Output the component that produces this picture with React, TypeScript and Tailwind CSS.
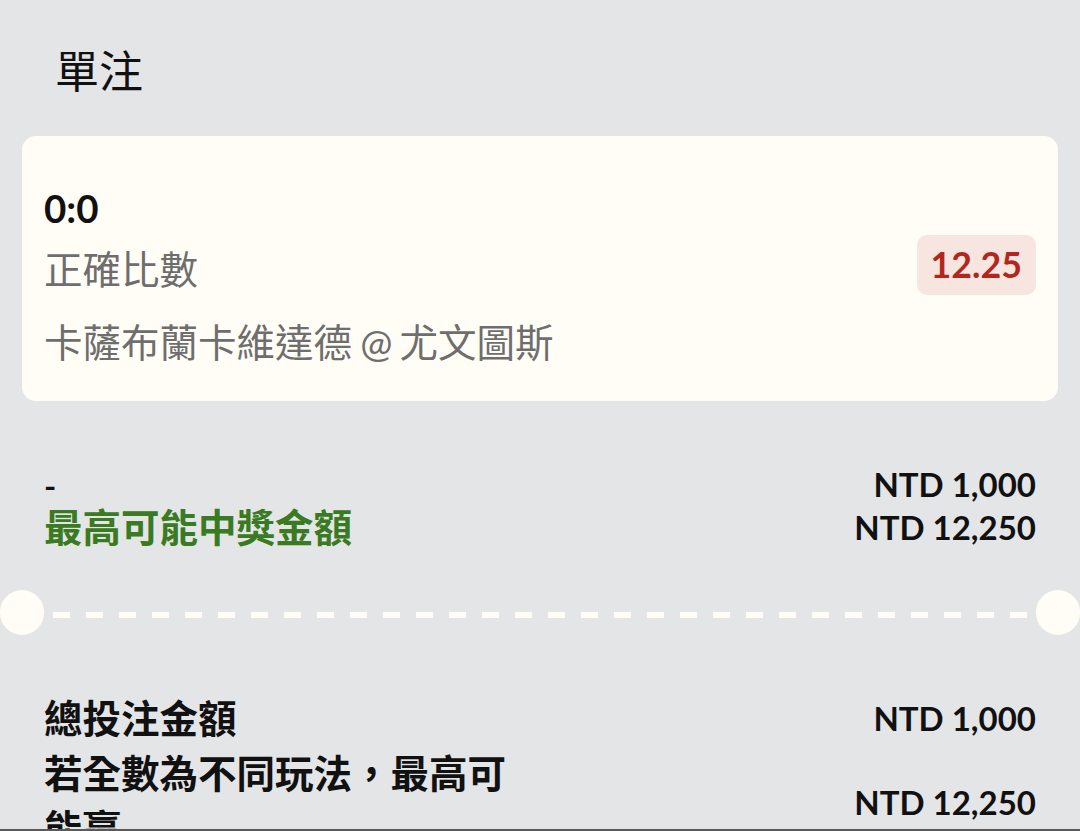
import React from "react";

const font = { fontFamily: "Lato, 'Noto Sans CJK TC', sans-serif" };

export default function App() {
  return (
    <div
      className="w-[1080px] h-[831px] bg-[#e4e5e7] flex flex-col overflow-hidden font-['Lato','Noto_Sans_CJK_TC',sans-serif]"
      style={font}
    >
      <div className="h-[829px] overflow-hidden flex flex-col">
        {/* Title */}
        <div className="pt-[41px] pl-[55px] text-[44px] leading-[60px] text-[#111111]">單注</div>

        {/* Selection card */}
        <div className="mt-[35px] mx-[22px] h-[265px] rounded-[14px] bg-[#fffdf5] px-[22px] flex items-center justify-between">
          <div className="flex flex-col pt-[47px] pb-[23px]">
            <div className="text-[38.5px] leading-[50px] font-bold text-[#111111]">0:0</div>
            <div className="text-[38.5px] leading-[73px] text-[#6e6e6e]">正確比數</div>
            <div className="text-[38.5px] leading-[72px] text-[#6e6e6e]">
              卡薩布蘭卡維達德<span className="tracking-[-1.5px]"> @ </span>尤文圖斯
            </div>
          </div>
          <div className="mb-[7px] h-[60px] px-[14px] rounded-[10px] bg-[#f6e6df] flex items-center text-[35.75px] font-bold text-[#b3261e]">
            12.25
          </div>
        </div>

        {/* Stake summary */}
        <div className="mt-[62px] px-[44px] flex flex-col">
          <div className="h-[43px] flex items-center justify-between">
            <span className="text-[33px] font-bold text-[#111111] translate-y-[1px]">-</span>
            <span className="text-[33px] font-bold text-[#111111]">NTD 1,000</span>
          </div>
          <div className="h-[43px] flex items-center justify-between">
            <span className="text-[38.5px] font-bold text-[#3a7a22] leading-[43px]">最高可能中獎金額</span>
            <span className="text-[33px] font-bold text-[#111111]">NTD 12,250</span>
          </div>
        </div>

        {/* Ticket divider */}
        <div className="mt-[41px] flex items-center">
          <div className="w-[44px] h-[45px] rounded-full bg-[#fffdf5] shrink-0" />
          <div className="flex-1 mx-[9px] mt-[5px] h-[6px] bg-[repeating-linear-gradient(90deg,#fffdf5_0px,#fffdf5_17px,transparent_17px,transparent_33px)]" />
          <div className="w-[44px] h-[45px] rounded-full bg-[#fffdf5] shrink-0" />
        </div>

        {/* Totals */}
        <div className="mt-[56px] px-[44px] flex flex-col">
          <div className="h-[55px] flex items-center justify-between">
            <span className="text-[38.5px] font-bold text-[#111111] leading-[55px]">總投注金額</span>
            <span className="text-[33px] font-bold text-[#111111]">NTD 1,000</span>
          </div>
          <div className="flex items-center justify-between">
            <span className="w-[470px] text-[38.5px] font-bold text-[#111111] leading-[55px]">
              若全數為不同玩法，最高可能贏
            </span>
            <span className="text-[33px] font-bold text-[#111111] translate-y-[2px]">NTD 12,250</span>
          </div>
        </div>
      </div>
      <div className="h-[2px] bg-[#5a5a5a] shrink-0" />
    </div>
  );
}
